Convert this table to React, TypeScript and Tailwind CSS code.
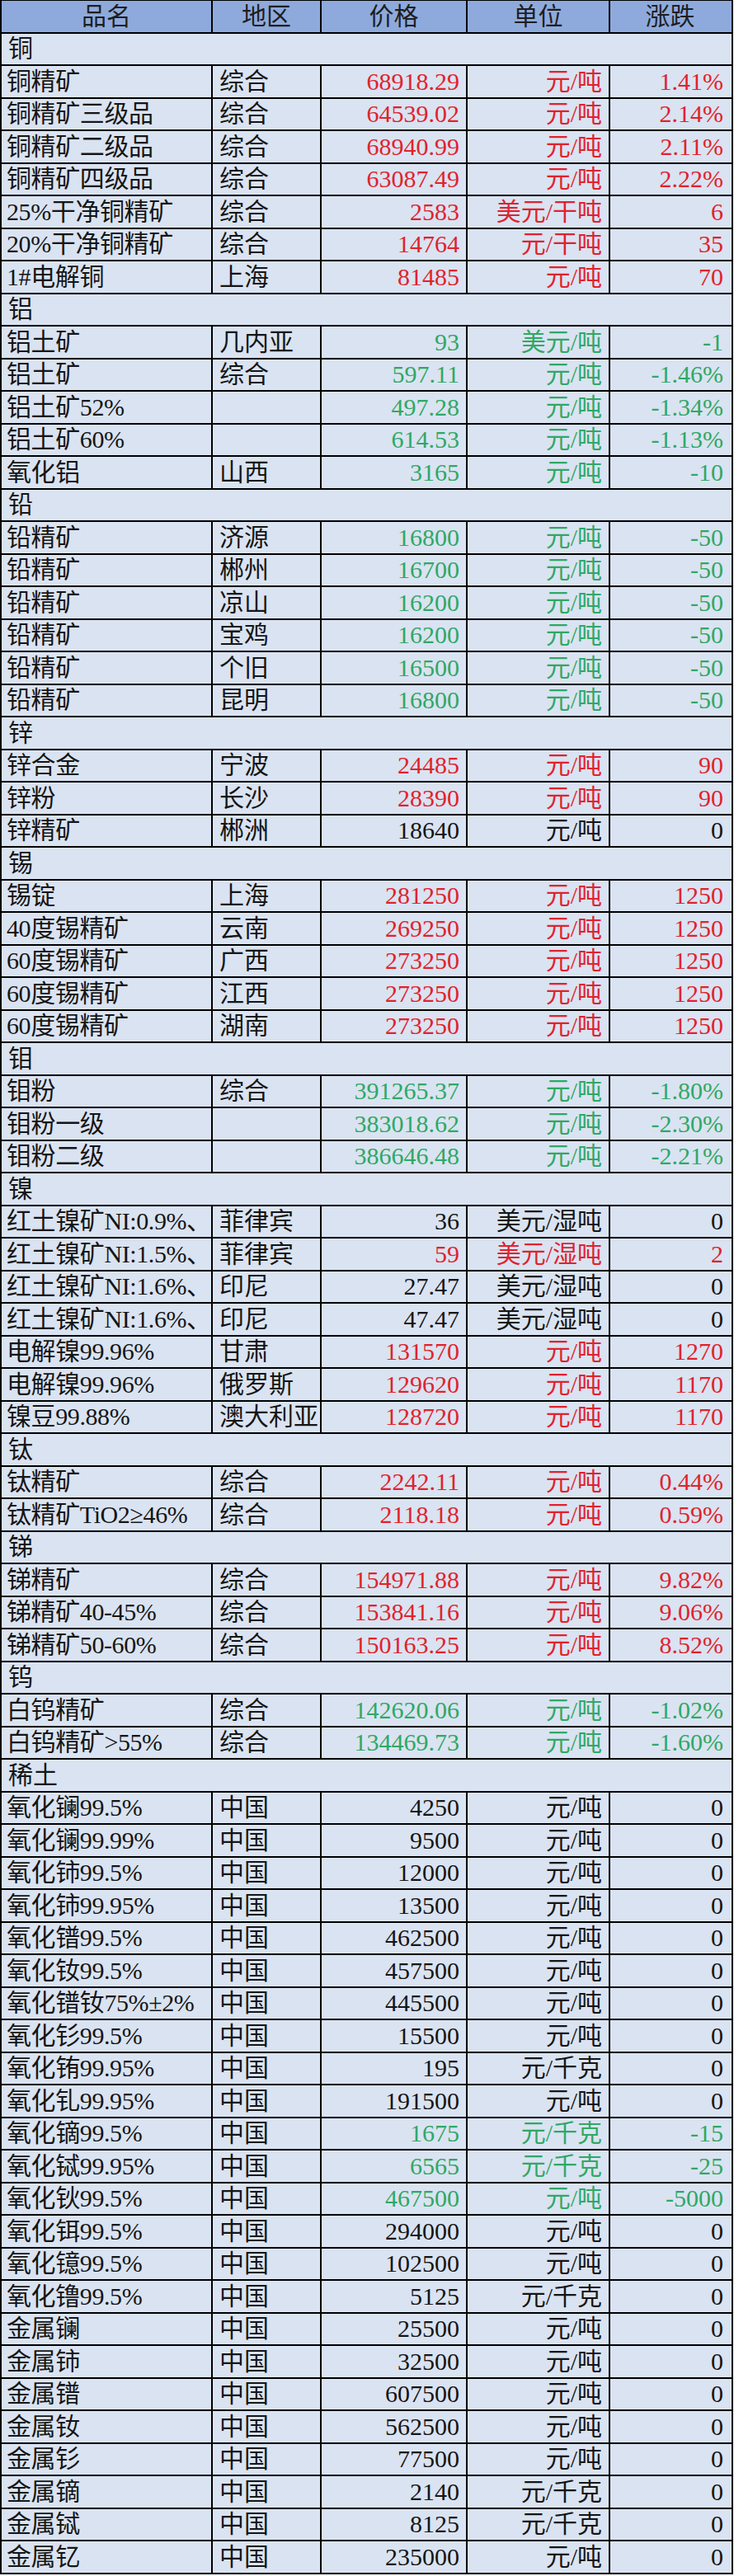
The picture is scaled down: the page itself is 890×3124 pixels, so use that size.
import React from "react"

type Tone = "r" | "g" | "k"
type Item = { section: string } | [string, string, string, string, string, Tone]

const rows: Item[] = [
  { section: "铜" },
  ["铜精矿", "综合", "68918.29", "元/吨", "1.41%", "r"],
  ["铜精矿三级品", "综合", "64539.02", "元/吨", "2.14%", "r"],
  ["铜精矿二级品", "综合", "68940.99", "元/吨", "2.11%", "r"],
  ["铜精矿四级品", "综合", "63087.49", "元/吨", "2.22%", "r"],
  ["25%干净铜精矿", "综合", "2583", "美元/干吨", "6", "r"],
  ["20%干净铜精矿", "综合", "14764", "元/干吨", "35", "r"],
  ["1#电解铜", "上海", "81485", "元/吨", "70", "r"],
  { section: "铝" },
  ["铝土矿", "几内亚", "93", "美元/吨", "-1", "g"],
  ["铝土矿", "综合", "597.11", "元/吨", "-1.46%", "g"],
  ["铝土矿52%", "", "497.28", "元/吨", "-1.34%", "g"],
  ["铝土矿60%", "", "614.53", "元/吨", "-1.13%", "g"],
  ["氧化铝", "山西", "3165", "元/吨", "-10", "g"],
  { section: "铅" },
  ["铅精矿", "济源", "16800", "元/吨", "-50", "g"],
  ["铅精矿", "郴州", "16700", "元/吨", "-50", "g"],
  ["铅精矿", "凉山", "16200", "元/吨", "-50", "g"],
  ["铅精矿", "宝鸡", "16200", "元/吨", "-50", "g"],
  ["铅精矿", "个旧", "16500", "元/吨", "-50", "g"],
  ["铅精矿", "昆明", "16800", "元/吨", "-50", "g"],
  { section: "锌" },
  ["锌合金", "宁波", "24485", "元/吨", "90", "r"],
  ["锌粉", "长沙", "28390", "元/吨", "90", "r"],
  ["锌精矿", "郴洲", "18640", "元/吨", "0", "k"],
  { section: "锡" },
  ["锡锭", "上海", "281250", "元/吨", "1250", "r"],
  ["40度锡精矿", "云南", "269250", "元/吨", "1250", "r"],
  ["60度锡精矿", "广西", "273250", "元/吨", "1250", "r"],
  ["60度锡精矿", "江西", "273250", "元/吨", "1250", "r"],
  ["60度锡精矿", "湖南", "273250", "元/吨", "1250", "r"],
  { section: "钼" },
  ["钼粉", "综合", "391265.37", "元/吨", "-1.80%", "g"],
  ["钼粉一级", "", "383018.62", "元/吨", "-2.30%", "g"],
  ["钼粉二级", "", "386646.48", "元/吨", "-2.21%", "g"],
  { section: "镍" },
  ["红土镍矿NI:0.9%、", "菲律宾", "36", "美元/湿吨", "0", "k"],
  ["红土镍矿NI:1.5%、", "菲律宾", "59", "美元/湿吨", "2", "r"],
  ["红土镍矿NI:1.6%、", "印尼", "27.47", "美元/湿吨", "0", "k"],
  ["红土镍矿NI:1.6%、", "印尼", "47.47", "美元/湿吨", "0", "k"],
  ["电解镍99.96%", "甘肃", "131570", "元/吨", "1270", "r"],
  ["电解镍99.96%", "俄罗斯", "129620", "元/吨", "1170", "r"],
  ["镍豆99.88%", "澳大利亚", "128720", "元/吨", "1170", "r"],
  { section: "钛" },
  ["钛精矿", "综合", "2242.11", "元/吨", "0.44%", "r"],
  ["钛精矿TiO2≥46%", "综合", "2118.18", "元/吨", "0.59%", "r"],
  { section: "锑" },
  ["锑精矿", "综合", "154971.88", "元/吨", "9.82%", "r"],
  ["锑精矿40-45%", "综合", "153841.16", "元/吨", "9.06%", "r"],
  ["锑精矿50-60%", "综合", "150163.25", "元/吨", "8.52%", "r"],
  { section: "钨" },
  ["白钨精矿", "综合", "142620.06", "元/吨", "-1.02%", "g"],
  ["白钨精矿>55%", "综合", "134469.73", "元/吨", "-1.60%", "g"],
  { section: "稀土" },
  ["氧化镧99.5%", "中国", "4250", "元/吨", "0", "k"],
  ["氧化镧99.99%", "中国", "9500", "元/吨", "0", "k"],
  ["氧化铈99.5%", "中国", "12000", "元/吨", "0", "k"],
  ["氧化铈99.95%", "中国", "13500", "元/吨", "0", "k"],
  ["氧化镨99.5%", "中国", "462500", "元/吨", "0", "k"],
  ["氧化钕99.5%", "中国", "457500", "元/吨", "0", "k"],
  ["氧化镨钕75%±2%", "中国", "445500", "元/吨", "0", "k"],
  ["氧化钐99.5%", "中国", "15500", "元/吨", "0", "k"],
  ["氧化铕99.95%", "中国", "195", "元/千克", "0", "k"],
  ["氧化钆99.95%", "中国", "191500", "元/吨", "0", "k"],
  ["氧化镝99.5%", "中国", "1675", "元/千克", "-15", "g"],
  ["氧化铽99.95%", "中国", "6565", "元/千克", "-25", "g"],
  ["氧化钬99.5%", "中国", "467500", "元/吨", "-5000", "g"],
  ["氧化铒99.5%", "中国", "294000", "元/吨", "0", "k"],
  ["氧化镱99.5%", "中国", "102500", "元/吨", "0", "k"],
  ["氧化镥99.5%", "中国", "5125", "元/千克", "0", "k"],
  ["金属镧", "中国", "25500", "元/吨", "0", "k"],
  ["金属铈", "中国", "32500", "元/吨", "0", "k"],
  ["金属镨", "中国", "607500", "元/吨", "0", "k"],
  ["金属钕", "中国", "562500", "元/吨", "0", "k"],
  ["金属钐", "中国", "77500", "元/吨", "0", "k"],
  ["金属镝", "中国", "2140", "元/千克", "0", "k"],
  ["金属铽", "中国", "8125", "元/千克", "0", "k"],
  ["金属钇", "中国", "235000", "元/吨", "0", "k"],
]

const toneClass: Record<Tone, string> = {
  r: "text-[#e0222d]",
  g: "text-[#2fa865]",
  k: "text-[#151515]",
}

const rowBase =
  "grid h-[39.5px] grid-cols-[256px_132px_177px_173px_145px] border-b-2 border-black"
const cell = "flex items-center overflow-hidden whitespace-nowrap px-2"

function Header() {
  const heads = ["品名", "地区", "价格", "单位", "涨跌"]
  return (
    <div className={`${rowBase} bg-[#8eaadc] text-[#1e1e1e]`}>
      {heads.map((h, i) => (
        <div
          key={h}
          className={`${cell} justify-center ${i < 4 ? "border-r-2 border-black" : ""}`}
        >
          {h}
        </div>
      ))}
    </div>
  )
}

export default function App() {
  return (
    <div className="min-h-screen bg-white">
      <div
        className="w-[889px] border-x-2 border-t border-black text-[30px] leading-none"
        style={{ fontFamily: '"Liberation Serif", "Noto Sans CJK SC", serif' }}
      >
        <Header />
        {rows.map((r, i) => {
          if (!Array.isArray(r)) {
            return (
              <div
                key={i}
                className="flex h-[39.5px] items-center border-b-2 border-black bg-[#dae3f1] px-2 text-[#151515]"
              >
                {r.section}
              </div>
            )
          }
          const [name, region, price, unit, change, tone] = r
          const t = toneClass[tone]
          return (
            <div key={i} className={`${rowBase} bg-[#dae3f1]`}>
              <div className="flex items-center overflow-hidden whitespace-nowrap border-r-2 border-black pl-[6px] tracking-[-0.4px] text-[#151515]">
                {name}
              </div>
              <div className={`${cell} border-r-2 border-black text-[#151515]`}>
                {region}
              </div>
              <div className={`${cell} justify-end border-r-2 border-black ${t}`}>
                {price}
              </div>
              <div className={`${cell} justify-end border-r-2 border-black ${t}`}>
                {unit}
              </div>
              <div className={`${cell} justify-end ${t}`}>{change}</div>
            </div>
          )
        })}
      </div>
    </div>
  )
}
